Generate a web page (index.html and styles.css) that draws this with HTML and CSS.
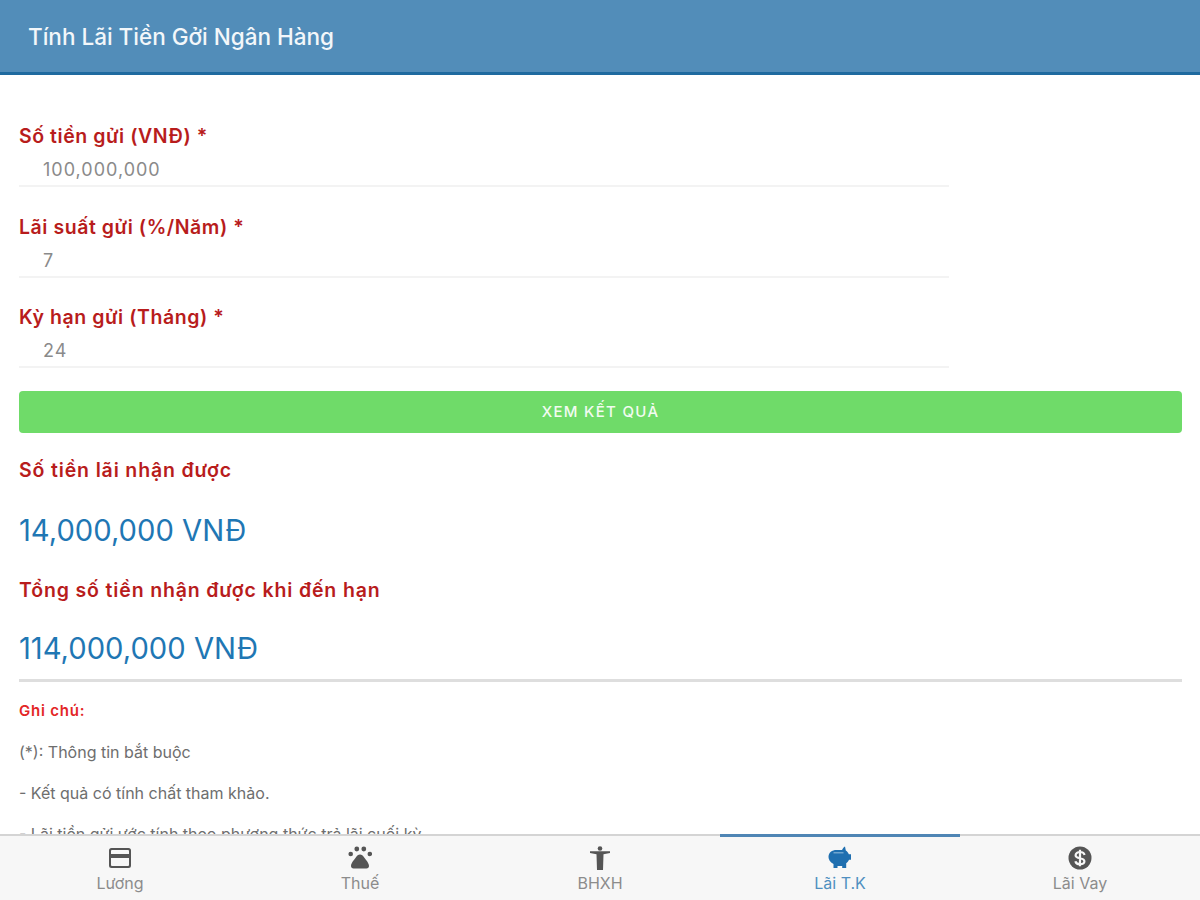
FILE: index.html
```html
<!DOCTYPE html>
<html lang="vi">

<head>
    <meta charset="UTF-8" />
    <meta name="viewport" content="width=device-width, initial-scale=1" />
    <title>Tính Lãi Tiền Gởi Ngân Hàng</title>
    <link rel="stylesheet" href="styles.css">
</head>

<body>
    <div class="header">
        <h1>Tính Lãi Tiền Gởi Ngân Hàng</h1>
    </div>

    <div class="content">
        <div class="fields">
            <div class="field">
                <label>Số tiền gửi (VNĐ) *</label>
                <div class="field-value">100,000,000</div>
            </div>
            <div class="field">
                <label>Lãi suất gửi (%/Năm) *</label>
                <div class="field-value">7</div>
            </div>
            <div class="field">
                <label>Kỳ hạn gửi (Tháng) *</label>
                <div class="field-value">24</div>
            </div>
        </div>

        <button class="submit-btn">XEM KẾT QUẢ</button>

        <div class="result">
            <h2>Số tiền lãi nhận được</h2>
            <div class="result-value">14,000,000 VNĐ</div>
        </div>
        <div class="result">
            <h2>Tổng số tiền nhận được khi đến hạn</h2>
            <div class="result-value">114,000,000 VNĐ</div>
        </div>

        <div class="notes">
            <h3>Ghi chú:</h3>
            <p>(*): Thông tin bắt buộc</p>
            <p>- Kết quả có tính chất tham khảo.</p>
            <p>- Lãi tiền gửi ước tính theo phương thức trả lãi cuối kỳ.</p>
        </div>
    </div>

    <div class="tabbar">
        <div class="tab">
            <svg viewBox="0 0 24 24" width="24" height="24">
                <path fill="currentColor" fill-rule="evenodd" d="M3.500 2h17A2.500 2.500 0 0 1 23 4.500v15a2.500 2.500 0 0 1-2.500 2.500h-17A2.500 2.500 0 0 1 1 19.500v-15A2.500 2.500 0 0 1 3.500 2zM3 5v3h18V5a1 1 0 0 0-1-1H4a1 1 0 0 0-1 1zm0 7v7a1 1 0 0 0 1 1h16a1 1 0 0 0 1-1v-7z" />
            </svg>
            <span>Lương</span>
        </div>
        <div class="tab">
            <svg viewBox="0 0 24 24" width="24" height="24">
                <g fill="currentColor">
                    <circle cx="2.700" cy="8" r="2.300" />
                    <circle cx="8.800" cy="3" r="2.400" />
                    <circle cx="15.800" cy="3" r="2.400" />
                    <circle cx="21.800" cy="8" r="2.300" />
                    <path d="M12 8.500c1.700 0 3 1 4.200 3 1.300 2.200 4.800 5.300 4.800 8.500 0 1.500-1 2.500-2.500 2.500h-13C4 22.500 3 21.500 3 20c0-3.200 3.500-6.300 4.800-8.500 1.200-2 2.500-3 4.200-3z" />
                </g>
            </svg>
            <span>Thuế</span>
        </div>
        <div class="tab">
            <svg viewBox="0 0 24 24" width="24" height="24">
                <g fill="currentColor">
                    <circle cx="12" cy="2.500" r="2.300" />
                    <path d="M2 5.200h20v1.800l-6.500 1.200L15 24H9L8.500 8.200 2 7z" />
                </g>
            </svg>
            <span>BHXH</span>
        </div>
        <div class="tab active">
            <svg viewBox="0 0 24 24" width="24" height="24">
                <path fill="currentColor" d="M17 .5l.8 4c1.500 1 2.500 2.300 3 3.700H23v5.500h-2c-.6 1.500-1.600 2.700-2.800 3.500v4.800h-4v-2H9.500v2h-4V18C2 16 .5 13.500.5 11c0-4.500 3.500-7 8-7H14c1-1.700 1.800-3 3-3.500z" />
                <path fill="#6fa5cf" d="M5.500 6h10v1.500h-10z" />
            </svg>
            <span>Lãi T.K</span>
        </div>
        <div class="tab">
            <svg viewBox="0 0 24 24" width="24" height="24">
                <circle cx="12" cy="12" r="11.500" fill="currentColor" />
                <path d="M16.500 9c-.3-1.900-2.200-3-4.500-3S7.600 7.200 7.600 9.200c0 4.300 8.800 1.900 8.800 6 0 1.900-2 3-4.400 3s-4.200-1.100-4.600-3M12 3.800v16.400" fill="none" stroke="#f7f7f7" stroke-width="2.200" />
            </svg>
            <span>Lãi Vay</span>
        </div>
    </div>
</body>

</html>
```

FILE: styles.css
```css
html,
body {
    height: 100%;
}

body {
    margin: 0;
    font-family: 'Inter', 'Roboto', sans-serif;
    background-color: #fff;
    display: flex;
    flex-direction: column;
    height: 100vh;
    overflow: hidden;
}

.header {
    flex: none;
    height: 72px;
    display: flex;
    align-items: center;
    background-color: #528db9;
    border-bottom: 3px solid #1f6a9f;
    padding-left: 28px;
}

.header h1 {
    margin: 0;
    font-size: 22.500px;
    font-weight: 500;
    color: #f3f7fa;
}

.content {
    flex: 1;
    min-height: 0;
    overflow: hidden;
    padding: 47px 18px 0 19px;
}

.fields {
    width: 930px;
    display: flex;
    flex-direction: column;
    gap: 25.500px;
}

.field label {
    display: block;
    font-size: 19.500px;
    line-height: 28px;
    font-weight: 600;
    letter-spacing: 0.550px;
    color: #b81c1c;
}

.field-value {
    height: 35px;
    line-height: 39px;
    padding-left: 24px;
    font-size: 18px;
    letter-spacing: 1px;
    color: #8a8a8a;
    border-bottom: 2px solid #f3f3f3;
}

.submit-btn {
    display: block;
    width: 100%;
    height: 42px;
    margin-top: 22.500px;
    border: none;
    border-radius: 4px;
    background-color: #6fdb69;
    color: #f2fbf1;
    font-family: inherit;
    font-size: 15px;
    font-weight: 500;
    letter-spacing: 1.300px;
}

.result {
    height: 120px;
}

.result h2 {
    margin: 0;
    padding-top: 23px;
    font-size: 19.500px;
    line-height: 28px;
    font-weight: 600;
    letter-spacing: 0.850px;
    color: #b81c1c;
}

.result-value {
    margin-top: 30px;
    font-size: 29.200px;
    line-height: 34px;
    color: #1f77b4;
}

.result + .result .result-value {
    margin-top: 28px;
}

.notes {
    margin-top: 6px;
    border-top: 3px solid #dedede;
    padding-top: 19px;
    color: #6e6e6e;
    font-size: 16px;
}

.notes h3 {
    margin: 0;
    font-size: 15px;
    line-height: 20px;
    font-weight: 600;
    letter-spacing: 0.800px;
    color: #e32626;
}

.notes p {
    margin: 21px 0 0;
    line-height: 20px;
}

.tabbar {
    flex: none;
    height: 64px;
    display: flex;
    background-color: #f7f7f7;
    border-top: 2px solid #d4d4d4;
}

.tab {
    flex: 1;
    display: flex;
    flex-direction: column;
    align-items: center;
    padding-top: 9px;
    margin-top: -2px;
    border-top: 3px solid transparent;
    color: #555;
}

.tab span {
    margin-top: 3px;
    font-size: 16px;
    line-height: 20px;
    color: #8c8c8c;
}

.tab.active {
    border-top-color: #4f86b5;
    color: #1f6fb0;
}

.tab.active span {
    color: #4f8fc0;
}
```
